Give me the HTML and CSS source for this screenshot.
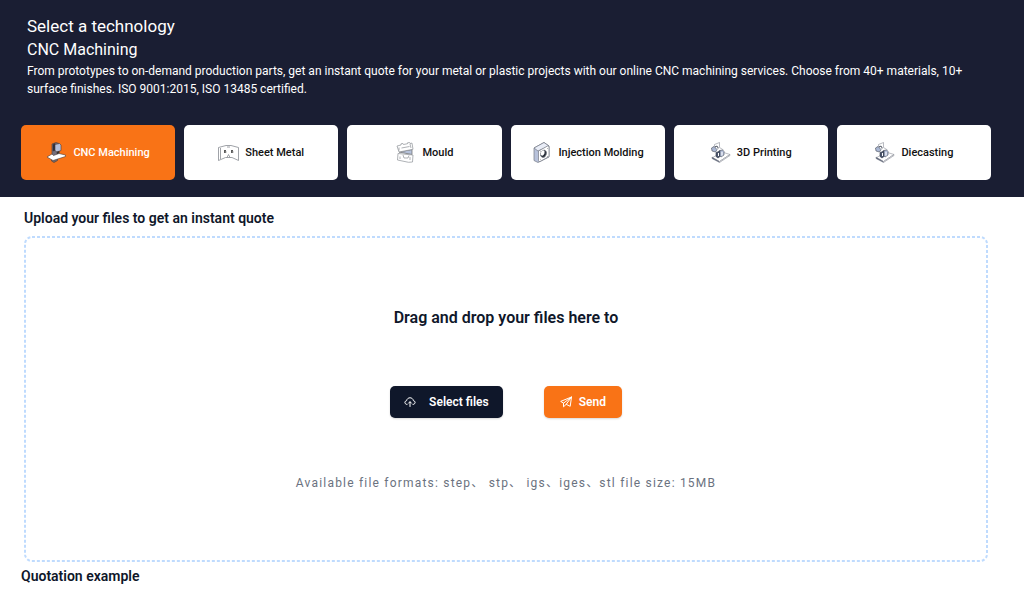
FILE: index.html
```html
<!DOCTYPE html>
<html lang="en">
<head>
  <meta charset="UTF-8">
  <meta name="viewport" content="width=device-width, initial-scale=1.0">
  <title>Instant Quote</title>
  <link rel="stylesheet" href="styles.css">
</head>
<body>

  <header class="tech">
    <div class="intro">
      <h1>Select a technology</h1>
      <h2>CNC Machining</h2>
      <p>From prototypes to on-demand production parts, get an instant quote for your metal or plastic projects with our online CNC machining services. Choose from 40+ materials, 10+ surface finishes. ISO 9001:2015, ISO 13485 certified.</p>
    </div>

    <div class="tech-list">
      <button type="button" class="tech-btn active">
        <svg viewBox="0 0 21 21" stroke="#4b3a35" stroke-width=".6" stroke-linejoin="round">
          <path d="M6 2l4-1.500 3 1v11l-4 2-3-1z" fill="#75707c"/>
          <path d="M7 2.500l2-1v7l-2 .5z" fill="#222b40"/>
          <path d="M9 2.500l4.500-1L15 3v5.500L11 10 9 8.500z" fill="#b4bfda"/>
          <path d="M11 10l2-.7v2.500l-2 .5z" fill="#333"/>
          <path d="M5.500 16l6-1v3.500L8 20.500 5.500 19z" fill="#706a70"/>
          <path d="M1 15l5-3 1.500 1.500 5.500-2 6.500 1.500v1.500L7 18.500z" fill="#fff"/>
        </svg>
        CNC Machining
      </button>
      <button type="button" class="tech-btn">
        <svg viewBox="0 0 21 21" fill="none" stroke="#888b92" stroke-width=".8" stroke-linejoin="round">
          <path d="M.5 5.500L8 3.500h5l7.500 2v13L14 15.500H7.500L.5 18.500z" fill="#fff"/>
          <path d="M9 15.500l1.500-3 1.500 3M9 5h3M2.500 6v11"/>
          <path d="M7 8v3M14 8v3" stroke="#333" stroke-width="1.600"/>
          <path d="M8 9v2M15 9v2" stroke="#aaa"/>
        </svg>
        Sheet Metal
      </button>
      <button type="button" class="tech-btn">
        <svg viewBox="0 0 21 21" fill="#fff" stroke="#8d9097" stroke-width=".7" stroke-linejoin="round">
          <path d="M4 10l13-2.500v5z" fill="#b6c2da" stroke="#666"/>
          <path d="M2 4l4-1V1.800l2-.3.5 1 4-.8V.8l2-.3.5 1 2-.4 1 6.200L4 10z"/>
          <path d="M4 5.500v3M6.500 6l8-1.500M15 2l1 4" fill="none"/>
          <path d="M3 11.500l15 1.500-.5 7-4 .3L2.500 18z"/>
          <path d="M8 13l1 3h4l1-2.500M5 14.500v2.500M15 15v3" fill="none"/>
        </svg>
        Mould
      </button>
      <button type="button" class="tech-btn">
        <svg viewBox="0 0 21 21" stroke="#747984" stroke-width=".7" stroke-linejoin="round">
          <path d="M3 6L13 .5l5 3.500v11L7 20.500l-4-2z" fill="#b8c2db"/>
          <path d="M3 6L13 .5l5 3.500L7 9z" fill="#e9edf7"/>
          <path d="M7.500 9l9-5q1.500-.5 1.500 1v9.500l-9 5q-1.500.5-1.500-1z" fill="#fff"/>
          <ellipse cx="12.500" cy="11.800" rx="2.800" ry="3.800" fill="#252b35" transform="rotate(20 12.500 11.800)"/>
          <ellipse cx="11.700" cy="11" rx="1.800" ry="2.700" fill="#fff" stroke="none" transform="rotate(20 11.700 11)"/>
          <path d="M9.500 9.300h.5M16 6.500h.5M9.500 17.300h.5M16 14.500h.5" stroke="#333"/>
        </svg>
        Injection Molding
      </button>
      <button type="button" class="tech-btn">
        <svg viewBox="0 0 21 21" fill="none" stroke="#8b8f98" stroke-width=".6" stroke-linejoin="round">
          <path d="M4.500 5V2.500L9.500.5v5l4 2.500" fill="#fff"/>
          <path d="M2 16l10-6 8 2.500L9.500 19.500z" fill="#fff"/>
          <path d="M2 15l7.500 4.500v1L2 16.500z" fill="#4c566d"/>
          <path d="M9.500 19.500L20 12.500v1l-10.500 7" fill="#fff"/>
          <path d="M1.500 6l2.500-1.500 3 3-1.500 2.500-3.500-1z" fill="#abb8d4" stroke="#444b58"/>
          <path d="M5 5q3-2 3 1.500" stroke="#333b4a" stroke-width="1"/>
          <path d="M7.500 10l2.500-1.500v6L8 16l-2-1.500v-4z" fill="#4c566d" stroke="#333b4a"/>
          <path d="M10 8.500q3-1.500 4 1v3.500l-3 2-1-1z" fill="#b4bfda" stroke="#444b58"/>
          <path d="M8.500 11v3M12 10v3.500" stroke="#fff" stroke-width="1"/>
        </svg>
        3D Printing
      </button>
      <button type="button" class="tech-btn">
        <svg viewBox="0 0 21 21" fill="none" stroke="#8b8f98" stroke-width=".6" stroke-linejoin="round">
          <path d="M4.500 5V2.500L9.500.5v5l4 2.500" fill="#fff"/>
          <path d="M2 16l10-6 8 2.500L9.500 19.500z" fill="#fff"/>
          <path d="M2 15l7.500 4.500v1L2 16.500z" fill="#4c566d"/>
          <path d="M9.500 19.500L20 12.500v1l-10.500 7" fill="#fff"/>
          <path d="M1.500 6l2.500-1.500 3 3-1.500 2.500-3.500-1z" fill="#abb8d4" stroke="#444b58"/>
          <path d="M5 5q3-2 3 1.500" stroke="#333b4a" stroke-width="1"/>
          <path d="M7.500 10l2.500-1.500v6L8 16l-2-1.500v-4z" fill="#4c566d" stroke="#333b4a"/>
          <path d="M10 8.500q3-1.500 4 1v3.500l-3 2-1-1z" fill="#b4bfda" stroke="#444b58"/>
          <path d="M8.500 11v3M12 10v3.500" stroke="#fff" stroke-width="1"/>
        </svg>
        Diecasting
      </button>
    </div>
  </header>

  <main>
    <section class="upload">
      <h3>Upload your files to get an instant quote</h3>
      <div class="drop-zone">
        <svg class="outline" aria-hidden="true"><rect x="1" y="1" rx="7"/></svg>
        <h4>Drag and drop your files here to</h4>
        <div class="actions">
          <button type="button" class="btn btn-dark">
            <svg viewBox="0 0 12 12" fill="none" stroke="currentColor" stroke-linecap="round" stroke-linejoin="round">
              <path d="M3 8.500C.2 8.300.2 5 2.600 4.700 3.200.8 8.800.8 9.400 4.700c2.400.3 2.400 3.600-.4 3.800M6 10.500V6M4.500 7.200L6 5.700l1.500 1.500"/>
            </svg>
            Select files
          </button>
          <button type="button" class="btn btn-orange">
            <svg viewBox="0 0 12 12" fill="none" stroke="currentColor" stroke-linecap="round" stroke-linejoin="round">
              <path d="M11.500 1L.7 5.400l2.800 1.800L11.500 1l-1.300 9.300-4-2L11.500 1M3.500 7.200v3.600l2.700-2.500"/>
            </svg>
            Send
          </button>
        </div>
        <p class="formats">Available file formats: step、 stp、 igs、iges、stl file size: 15MB</p>
      </div>
    </section>

    <section class="example">
      <h3>Quotation example</h3>
    </section>
  </main>

</body>
</html>
```
FILE: styles.css
```css
* {
  box-sizing: border-box;
  margin: 0;
  padding: 0;
}
body {
  font-family: Roboto, "Noto Sans CJK SC", sans-serif;
  background-color: #fff;
  color: #0f172a;
}
button {
  border: none;
  font-family: inherit;
  cursor: pointer;
}
.tech {
  background-color: #1a1e33;
  color: #fff;
  padding: 14px 33px 17px 21px;
}
.intro {
  padding: 0 6px;
}
h1 {
  font-size: 17px;
  font-weight: 400;
  line-height: 24px;
}
h2 {
  font-size: 16px;
  font-weight: 400;
  line-height: 24px;
}
.intro p {
  font-size: 12px;
  line-height: 18px;
}
.tech-list {
  display: grid;
  grid-template-columns: repeat(6, 1fr);
  gap: 9px;
  margin-top: 27px;
}
.tech-btn {
  display: flex;
  align-items: center;
  justify-content: center;
  gap: 6px;
  height: 55px;
  border-radius: 5px;
  background-color: #fff;
  color: #111;
  font-size: 11px;
  font-weight: 500;
}
.tech-btn svg {
  width: 21px;
  height: 21px;
}
.tech-btn.active {
  background-color: #f97316;
  color: #fff;
}
h3 {
  font-size: 14px;
  font-weight: 600;
  line-height: 20px;
}
.upload {
  padding: 11px 36px 0 24px;
}
.drop-zone {
  position: relative;
  display: flex;
  flex-direction: column;
  align-items: center;
  margin-top: 8px;
  padding: 70px 20px;
}
.outline {
  position: absolute;
  inset: 0;
  width: 100%;
  height: 100%;
  pointer-events: none;
}
.outline rect {
  width: calc(100% - 2px);
  height: calc(100% - 2px);
  fill: none;
  stroke: #bfdbfe;
  stroke-width: 2px;
  stroke-dasharray: 3 2;
}
h4 {
  font-size: 16px;
  font-weight: 600;
  line-height: 24px;
}
.actions {
  display: flex;
  gap: 41px;
  margin: 56px 0;
}
.btn {
  display: flex;
  align-items: center;
  height: 32px;
  padding: 0 14px;
  border-radius: 5px;
  color: #fff;
  font-size: 12px;
  font-weight: 600;
  box-shadow: 0 1px 2px rgba(0, 0, 0, 0.15);
}
.btn svg {
  width: 12px;
  height: 12px;
}
.btn-dark {
  gap: 13px;
  background-color: #0f172a;
}
.btn-orange {
  gap: 7px;
  padding: 0 16px;
  background-color: #f97316;
}
.formats {
  color: #6b7280;
  font-size: 12px;
  line-height: 18px;
  letter-spacing: 0.1em;
}
.example {
  padding: 4px 21px;
}
```
